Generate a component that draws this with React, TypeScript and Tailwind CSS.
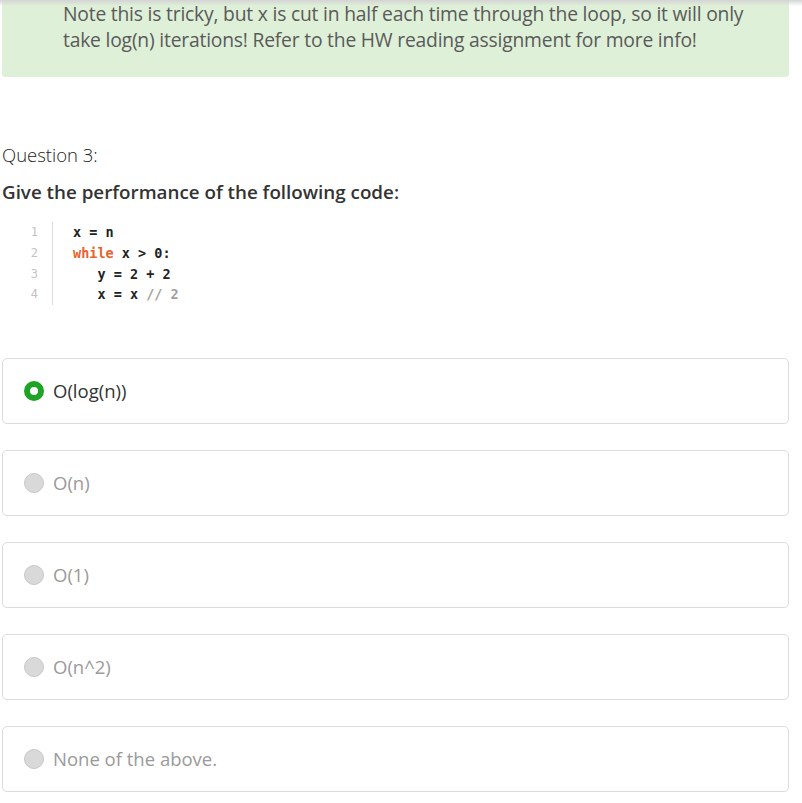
const options = [
  { label: "O(log(n))", selected: true },
  { label: "O(n)", selected: false },
  { label: "O(1)", selected: false },
  { label: "O(n^2)", selected: false },
  { label: "None of the above.", selected: false },
];

function Radio({ selected }: { selected: boolean }) {
  if (selected) {
    return <span className="block w-[20px] h-[20px] rounded-full border-[6px] border-[#1fa324] bg-white shrink-0" />;
  }
  return <span className="block w-[20px] h-[20px] rounded-full border border-[#c8c8c8] bg-[#d9d9d9] shrink-0" />;
}

export default function App() {
  return (
    <div className="relative min-h-screen bg-white pl-[2px] pr-[13px] text-[#333]" style={{ fontFamily: '"Open Sans", sans-serif' }}>
      {/* top shadow from sticky header */}
      <div className="absolute top-0 left-0 right-0 h-[6px] bg-gradient-to-b from-[#d4d4d4] to-transparent pointer-events-none" />

      <div className="bg-[#dff0d8] rounded-b-[3px] pl-[61px] pr-4 pt-[1px] pb-[24px] text-[19.3px] leading-[26px] text-[#5a5a5a] tracking-[-0.2px]">
        Note this is tricky, but x is cut in half each time through the loop, so it will only
        <br />
        take log(n) iterations! Refer to the HW reading assignment for more info!
      </div>

      <div className="mt-[65px] text-[18.5px] leading-[26px] font-light text-[#222]">Question 3:</div>
      <div className="mt-[11px] text-[18.8px] leading-[26px] font-semibold text-[#333]">Give the performance of the following code:</div>

      <div className="mt-[17px] flex text-[13.5px] leading-[20.75px] font-bold" style={{ fontFamily: '"DejaVu Sans Mono", monospace' }}>
        <div className="w-[51px] pr-[14px] text-right text-[#c4c4c4] font-normal text-[12px] border-r border-[#ddd]">
          <div>1</div>
          <div>2</div>
          <div>3</div>
          <div>4</div>
        </div>
        <div className="pl-[20px] text-[#222] whitespace-pre">
          <div>x = n</div>
          <div>
            <span className="text-[#e8622a]">while</span> x {">"} 0:
          </div>
          <div>{"   "}y = 2 + 2</div>
          <div>
            {"   "}x = x <span className="text-[#a0a0a0]">// 2</span>
          </div>
        </div>
      </div>

      <div className="mt-[53px] flex flex-col gap-[26px] pb-[10px]">
        {options.map((o) => (
          <div key={o.label} className="h-[66px] border border-[#dcdcdc] rounded-[5px] flex items-center pl-[21px] gap-[9px]">
            <Radio selected={o.selected} />
            <span className={"text-[18.5px] " + (o.selected ? "text-[#333]" : "text-[#9a9a9a]")}>{o.label}</span>
          </div>
        ))}
      </div>
    </div>
  );
}
